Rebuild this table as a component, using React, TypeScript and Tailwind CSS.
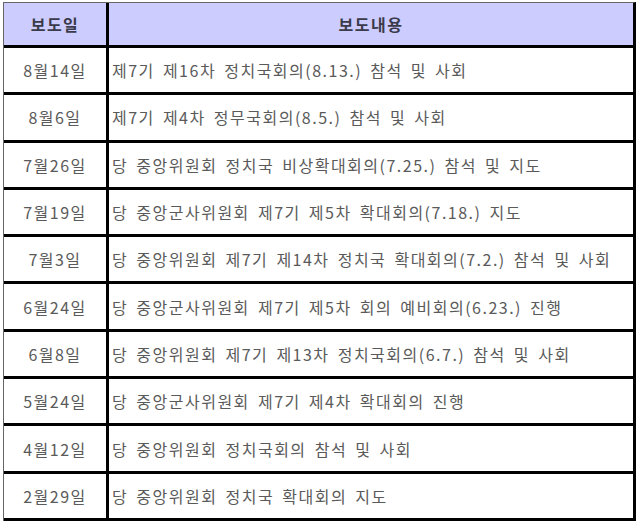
const ROWS = [
  ['8월14일', '제7기 제16차 정치국회의(8.13.) 참석 및 사회'],
  ['8월6일', '제7기 제4차 정무국회의(8.5.) 참석 및 사회'],
  ['7월26일', '당 중앙위원회 정치국 비상확대회의(7.25.) 참석 및 지도'],
  ['7월19일', '당 중앙군사위원회 제7기 제5차 확대회의(7.18.) 지도'],
  ['7월3일', '당 중앙위원회 제7기 제14차 정치국 확대회의(7.2.) 참석 및 사회'],
  ['6월24일', '당 중앙군사위원회 제7기 제5차 회의 예비회의(6.23.) 진행'],
  ['6월8일', '당 중앙위원회 제7기 제13차 정치국회의(6.7.) 참석 및 사회'],
  ['5월24일', '당 중앙군사위원회 제7기 제4차 확대회의 진행'],
  ['4월12일', '당 중앙위원회 정치국회의 참석 및 사회'],
  ['2월29일', '당 중앙위원회 정치국 확대회의 지도'],
];

export default function App() {
  return (
    <div className="h-[523px] w-[640px] bg-white pl-[3px] pt-[2px] font-['Noto_Sans_CJK_KR',sans-serif]">
      <div className="w-[633px] border-l border-t border-[#666] border-r-[3px] border-r-black">
        <div className="flex h-[45px] border-b-[3px] border-black bg-[#ccccff] text-[16px] font-bold tracking-[1.5px] text-[#3a3a4a]">
          <div className="flex w-[105px] items-center justify-center border-r-[3px] border-black">보도일</div>
          <div className="flex flex-1 items-center justify-center">보도내용</div>
        </div>
        {ROWS.map(([date, text]) => (
          <div
            key={date}
            className="flex h-[47.3px] border-b-[3px] border-black text-[16px] tracking-[1.5px] [word-spacing:3px] text-[#5a5a5a]"
          >
            <div className="flex w-[105px] items-center justify-center border-r-[3px] border-black">{date}</div>
            <div className="flex flex-1 items-center pl-[3px]">{text}</div>
          </div>
        ))}
      </div>
    </div>
  );
}
